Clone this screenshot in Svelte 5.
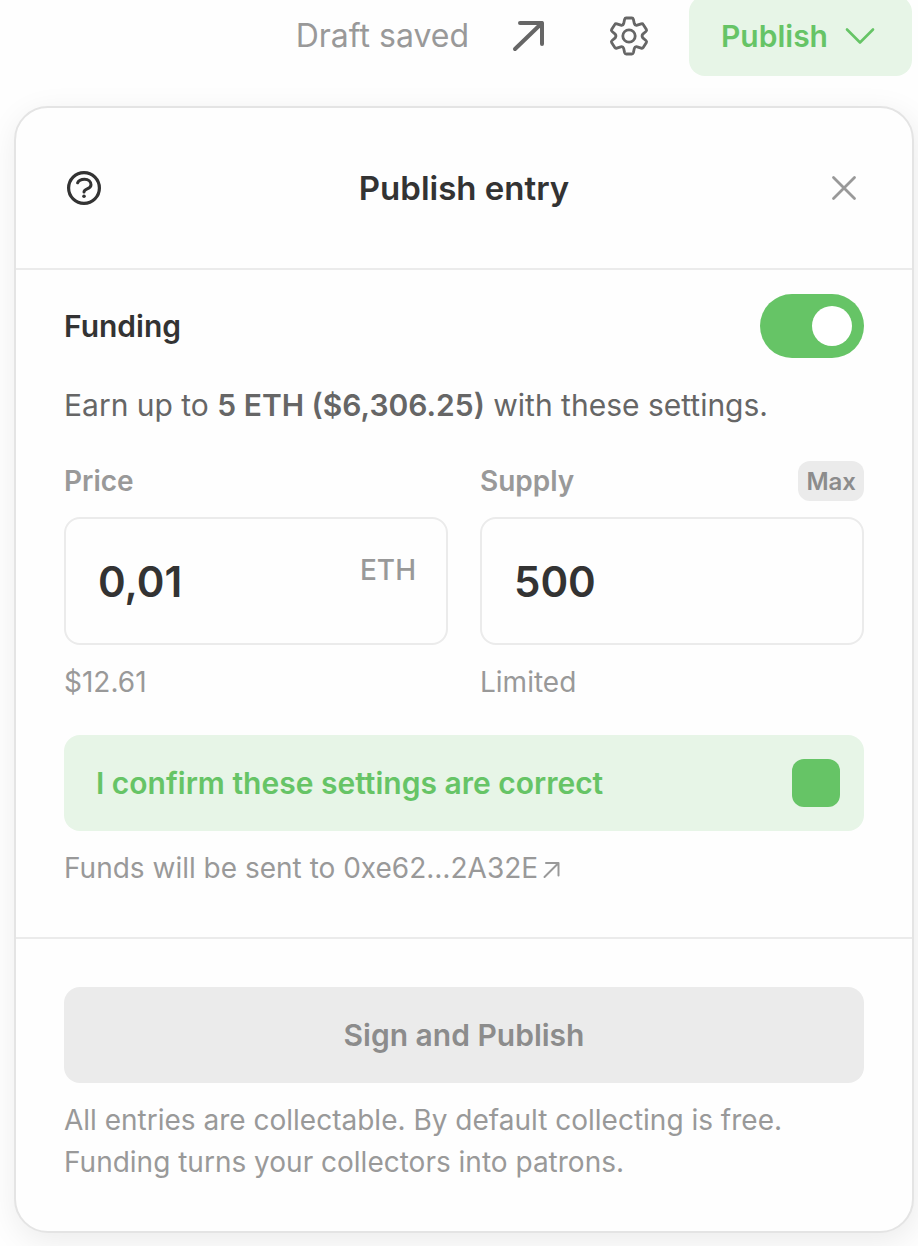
<script>
	let funding = true;
	let price = '0,01';
	let supply = '500';
	let confirmed = false;
</script>

<header class="toolbar">
	<span class="status">Draft saved</span>
	<a class="icon preview" href="#preview" aria-label="Preview">
		<svg viewBox="0 0 40 40">
			<path d="M6 33L33 7M11 7H33V28" stroke-width="4" />
		</svg>
	</a>
	<button class="icon" type="button" aria-label="Settings">
		<svg viewBox="0 0 40 40">
			<path
				d="M14.7 7.5L15.6 3.4Q16 2 17.2 2H22.8Q24 2 24.4 3.4L25.3 7.5Q26 9.8 28.2 9.2L32.2 7.9Q33.6 7.5 34.2 8.5L37.4 13.5Q38 14.6 36.9 15.5L33.8 18.1Q32.4 20 33.8 21.9L36.9 24.5Q38 25.4 37.4 26.5L34.2 31.5Q33.6 32.5 32.2 32.1L28.2 30.8Q26 30.2 25.3 32.5L24.4 36.6Q24 38 22.8 38H17.2Q16 38 15.6 36.6L14.7 32.5Q14 30.2 11.8 30.8L7.8 32.1Q6.4 32.5 5.8 31.5L2.6 26.5Q2 25.4 3.1 24.5L6.2 21.9Q7.6 20 6.2 18.1L3.1 15.5Q2 14.6 2.6 13.5L5.8 8.5Q6.4 7.5 7.8 7.9L11.800 9.2Q14 9.8 14.7 7.5Z"
				stroke-width="2.8"
			/>
			<circle cx="20" cy="20" r="6.2" stroke-width="2.8" />
		</svg>
	</button>
	<button class="publish" type="button">
		Publish
		<svg viewBox="0 0 40 40">
			<path d="M7 13.500L20 26.500L33 13.500" stroke-width="2.6" />
		</svg>
	</button>
</header>

<main class="card">
	<div class="head">
		<button class="icon help" type="button" aria-label="Help">
			<svg viewBox="0 0 40 40">
				<circle cx="20" cy="20" r="15.4" stroke-width="3.2" />
				<path d="M13.6 14.8C14.8 12 17.500 11.2 20.500 11.2C24.500 11.2 27 13.500 27 16.8C27 21.6 20 20.2 20 24" stroke-width="3" />
				<circle class="dot" cx="20" cy="28.3" r="1.8" />
			</svg>
		</button>
		<h1>Publish entry</h1>
		<button class="icon close" type="button" aria-label="Close">
			<svg viewBox="0 0 40 40">
				<path d="M9.5 9.5L30.5 30.5M30.5 9.5L9.5 30.5" stroke-width="2.8" />
			</svg>
		</button>
	</div>

	<section class="body">
		<div class="row">
			<label class="title" for="funding">Funding</label>
			<input class="toggle" id="funding" type="checkbox" role="switch" bind:checked={funding} />
		</div>
		<p class="earn">Earn up to <strong>5 ETH ($6,306.25)</strong> with these settings.</p>

		<div class="fields">
			<div class="field">
				<div class="row caption">
					<label for="price">Price</label>
				</div>
				<div class="box">
					<input id="price" type="text" inputmode="decimal" bind:value={price} />
					<span class="unit">ETH</span>
				</div>
				<p class="hint">$12.61</p>
			</div>
			<div class="field">
				<div class="row caption">
					<label for="supply">Supply</label>
					<button class="max" type="button">Max</button>
				</div>
				<div class="box">
					<input id="supply" type="text" inputmode="numeric" bind:value={supply} />
				</div>
				<p class="hint">Limited</p>
			</div>
		</div>

		<label class="confirm">
			I confirm these settings are correct
			<input type="checkbox" bind:checked={confirmed} />
		</label>
		<p class="hint funds">
			Funds will be sent to <a href="#address">0xe62…2A32E<svg viewBox="0 0 20 20"><path d="M2.5 17L16 3.5M4 3H16.5V15.5" stroke-width="2" /></svg></a>
		</p>
	</section>

	<footer>
		<button class="sign" type="button" disabled={!confirmed}>Sign and Publish</button>
		<p class="hint">
			All entries are collectable. By default collecting is free. Funding turns your collectors into
			patrons.
		</p>
	</footer>
</main>

<style>
	:global(body) {
		margin: 0;
		background: #fefefe;
		font-family: Inter, 'Liberation Sans', sans-serif;
		color: #333;
	}
	* {
		box-sizing: border-box;
	}
	h1,
	p {
		margin: 0;
	}
	button,
	input {
		margin: 0;
		padding: 0;
		border: 0;
		background: none;
		font: inherit;
		color: inherit;
	}
	button {
		cursor: pointer;
	}
	a {
		color: inherit;
		text-decoration: none;
	}
	svg {
		width: 40px;
		height: 40px;
		fill: none;
		stroke: currentColor;
		stroke-linecap: round;
		stroke-linejoin: round;
	}
	.icon,
	.icon svg {
		display: block;
		flex: none;
	}

	/* top bar */
	.toolbar {
		display: flex;
		justify-content: flex-end;
		align-items: center;
		gap: 40px;
		height: 72px;
		padding: 0 6px;
		color: #666;
	}
	.status {
		font-size: 32px;
		line-height: 48px;
		color: #999;
	}
	.preview {
		padding-right: 20px;
	}
	.publish {
		display: flex;
		flex: none;
		align-items: center;
		gap: 12px;
		height: 80px;
		padding: 0 32px;
		border-radius: 16px;
		background: #e7f5e7;
		color: #66c466;
		font-size: 30px;
		font-weight: 600;
	}

	/* panel */
	.card {
		margin: 34px 4px 13px 14px;
		border: 2px solid #e4e4e4;
		border-radius: 34px;
		background: #fefefe;
		box-shadow: 2px 8px 32px rgba(0, 0, 0, 0.08);
	}
	.head {
		display: flex;
		align-items: center;
		justify-content: space-between;
		height: 162px;
		padding: 0 48px;
		border-bottom: 2px solid #ebebeb;
	}
	h1 {
		font-size: 33px;
		line-height: 48px;
		font-weight: 600;
	}
	.help .dot {
		fill: currentColor;
		stroke: none;
	}
	.close {
		color: #999;
	}
	.body {
		padding: 24px 48px 48px;
		border-bottom: 2px solid #ebebeb;
	}
	.row {
		display: flex;
		align-items: center;
		justify-content: space-between;
	}
	.title {
		font-size: 30px;
		font-weight: 600;
	}
	.toggle {
		appearance: none;
		display: flex;
		width: 104px;
		height: 64px;
		padding: 12px;
		border-radius: 32px;
		background: #ccc;
		cursor: pointer;
	}
	.toggle::before {
		content: '';
		width: 40px;
		height: 40px;
		border-radius: 50%;
		background: #fff;
	}
	.toggle:checked {
		justify-content: flex-end;
		background: #66c466;
	}
	.earn {
		margin: 24px 0 32px;
		font-size: 30px;
		line-height: 47px;
		color: #666;
	}
	strong {
		font-weight: 600;
	}

	.fields {
		display: grid;
		grid-template-columns: 1fr 1fr;
		gap: 32px;
	}
	.caption {
		height: 40px;
		margin-bottom: 16px;
		font-size: 28px;
		font-weight: 600;
		color: #999;
	}
	.max {
		height: 40px;
		padding: 0 8px;
		border-radius: 12px;
		background: #ebebeb;
		color: #8c8c8c;
		font-size: 24px;
		font-weight: 600;
	}
	.box {
		position: relative;
	}
	.box input {
		display: block;
		width: 100%;
		height: 128px;
		padding: 0 32px;
		border: 2px solid #ebebeb;
		border-radius: 16px;
		font-size: 42px;
		font-weight: 600;
	}
	.unit {
		position: absolute;
		top: 32px;
		right: 32px;
		font-size: 28px;
		line-height: 42px;
		font-weight: 500;
		color: #999;
	}
	.hint {
		margin-top: 16px;
		font-size: 28px;
		line-height: 42px;
		color: #999;
	}

	.confirm {
		display: flex;
		align-items: center;
		justify-content: space-between;
		height: 96px;
		margin-top: 32px;
		padding: 0 24px 0 32px;
		border-radius: 16px;
		background: #e7f5e7;
		color: #66c466;
		font-size: 30px;
		font-weight: 600;
		cursor: pointer;
	}
	.confirm input {
		appearance: none;
		display: grid;
		place-items: center;
		width: 48px;
		height: 48px;
		border-radius: 12px;
		background: #66c466;
	}
	.confirm input:checked::before {
		content: '✓';
		color: #fff;
	}
	.funds svg {
		width: 20px;
		height: 20px;
		margin-left: 4px;
		vertical-align: -2px;
	}

	footer {
		padding: 48px;
	}
	.sign {
		display: block;
		width: 100%;
		height: 96px;
		border-radius: 16px;
		background: #66c466;
		color: #fff;
		font-size: 30px;
		font-weight: 600;
	}
	.sign:disabled {
		background: #ebebeb;
		color: #8c8c8c;
		cursor: default;
	}
</style>
